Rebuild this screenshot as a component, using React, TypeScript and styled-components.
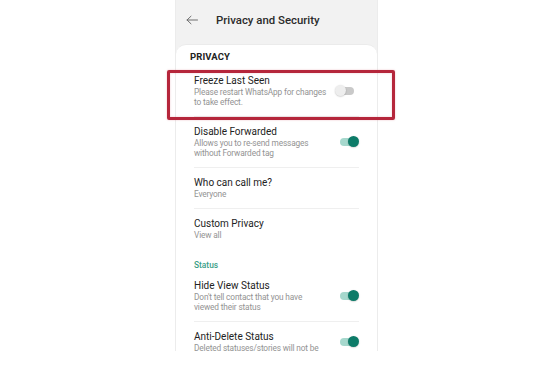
import React from "react";
import styled, { createGlobalStyle } from "styled-components";

const Global = createGlobalStyle`
  html, body { margin: 0; padding: 0; background: #ffffff; }
  body { font-family: Roboto, "Noto Sans", Arial, sans-serif; }
`;

const Page = styled.div`
  width: 560px;
  height: 385px;
  position: relative;
  overflow: hidden;
  background: #fff;
`;

const Screen = styled.div`
  margin-left: 175px;
  width: 203px;
  height: 351px;
  background: #f2f2f2;
  display: flex;
  flex-direction: column;
  overflow: hidden;
  border-left: 1px solid #ececec;
  border-right: 1px solid #ececec;
  box-sizing: border-box;
`;

const Header = styled.div`
  height: 44px;
  flex: none;
  display: flex;
  align-items: center;
  padding-left: 10px;
  gap: 18px;
  padding-bottom: 4px;
  box-sizing: border-box;
`;

const Title = styled.div`
  font-size: 11.4px;
  font-weight: 500;
  color: #2b2b2b;
`;

const Card = styled.div`
  flex: 1;
  background: #fff;
  border-radius: 10px 10px 0 0;
  border-top: 1px solid #ebebeb;
  padding-top: 6px;
  display: flex;
  flex-direction: column;
`;

const GroupLabel = styled.div`
  font-size: 9.5px;
  font-weight: 700;
  color: #222;
  line-height: 12px;
  padding: 0 14px 3px;
  letter-spacing: 0.1px;
`;

const SectionLabel = styled.div`
  font-size: 8.4px;
  font-weight: 500;
  color: #3b9e87;
  line-height: 12px;
  padding: 9px 18px 0;
`;

const Row = styled.div<{ $divider?: boolean }>`
  display: flex;
  align-items: center;
  margin: 0 18px;
  padding: 9px 0;
  border-bottom: ${(p) => (p.$divider ? "1px solid #efefef" : "1px solid transparent")};
`;

const Texts = styled.div`
  flex: 1;
  display: flex;
  flex-direction: column;
`;

const RowTitle = styled.div`
  font-size: 10px;
  color: #222;
  line-height: 12px;
`;

const RowSub = styled.div`
  font-size: 8.3px;
  letter-spacing: -0.15px;
  color: #939393;
  line-height: 10px;
`;

const Track = styled.div<{ $on: boolean }>`
  position: relative;
  width: 17px;
  height: 8px;
  border-radius: 4px;
  background: ${(p) => (p.$on ? "#a6d8cd" : "#c9c9c9")};
  flex: none;
  margin-right: ${(p) => (p.$on ? "2px" : "5px")};
`;

const Thumb = styled.div<{ $on: boolean }>`
  position: absolute;
  top: -2px;
  ${(p) => (p.$on ? "right: -2px;" : "left: -2px;")}
  width: 11px;
  height: 11px;
  border-radius: 50%;
  background: ${(p) => (p.$on ? "#0d7b68" : "#eeeeee")};
  box-shadow: 0 0.5px 1.5px rgba(0, 0, 0, 0.25);
`;

const Highlight = styled.div`
  position: absolute;
  left: 167px;
  top: 70px;
  width: 228px;
  height: 50px;
  border: 3px solid #b5263b;
  border-radius: 2px;
  box-sizing: border-box;
  box-shadow: 0 0 2px rgba(200, 60, 80, 0.35), inset 0 0 2px rgba(200, 60, 80, 0.3);
`;

const Toggle = ({ on }: { on: boolean }) => (
  <Track $on={on}>
    <Thumb $on={on} />
  </Track>
);

const BackArrow = () => (
  <svg width="12" height="10" viewBox="0 0 12 10" fill="none">
    <path d="M11.5 5H1M5 1.2L1 5L5 8.8" stroke="#6f6f6f" strokeWidth="1" strokeLinecap="round" strokeLinejoin="round" />
  </svg>
);

type Item = { title: string; sub: string[]; toggle?: boolean; divider?: boolean };

const privacy: Item[] = [
  { title: "Freeze Last Seen", sub: ["Please restart WhatsApp for changes", "to take effect."], toggle: false, divider: true },
  { title: "Disable Forwarded", sub: ["Allows you to re-send messages", "without Forwarded tag"], toggle: true, divider: true },
  { title: "Who can call me?", sub: ["Everyone"], divider: true },
  { title: "Custom Privacy", sub: ["View all"] },
];

const status: Item[] = [
  { title: "Hide View Status", sub: ["Don't tell contact that you have", "viewed their status"], toggle: true, divider: true },
  { title: "Anti-Delete Status", sub: ["Deleted statuses/stories will not be"], toggle: true },
];

const renderRow = (it: Item) => (
  <Row key={it.title} $divider={it.divider}>
    <Texts>
      <RowTitle>{it.title}</RowTitle>
      {it.sub.map((s) => (
        <RowSub key={s}>{s}</RowSub>
      ))}
    </Texts>
    {it.toggle !== undefined && <Toggle on={it.toggle} />}
  </Row>
);

export default function App() {
  return (
    <Page>
      <Global />
      <Screen>
        <Header>
          <BackArrow />
          <Title>Privacy and Security</Title>
        </Header>
        <Card>
          <GroupLabel>PRIVACY</GroupLabel>
          {privacy.map(renderRow)}
          <SectionLabel>Status</SectionLabel>
          {status.map(renderRow)}
        </Card>
      </Screen>
      <Highlight />
    </Page>
  );
}
